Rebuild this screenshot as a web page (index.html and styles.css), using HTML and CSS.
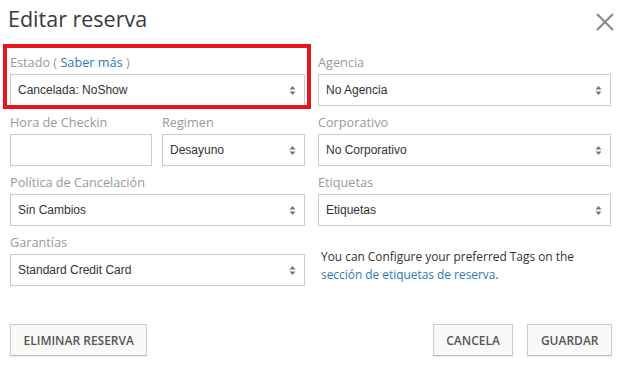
FILE: index.html
```html
<!DOCTYPE html>
<html lang="es">
<head>
<meta charset="utf-8">
<title>Editar reserva</title>
<link rel="stylesheet" href="styles.css">
</head>
<body>
<div class="modal">
  <div class="header">
    <h1 class="title">Editar reserva</h1>
    <svg class="close" width="18" height="18" viewBox="0 0 18 18"><path d="M1 1L17 17M17 1L1 17" stroke="#8a8a8a" stroke-width="2.2" fill="none"/></svg>
  </div>
  <div class="form">
    <div class="group highlight">
      <div class="label">Estado ( <span class="link">Saber más</span> )</div>
      <div class="select"><span>Cancelada: NoShow</span><svg class="arrows" width="7" height="11" viewBox="0 0 7 11"><path d="M3.5 1L6.5 4.5H0.5Z M3.5 10L6.5 6.5H0.5Z" fill="#777"/></svg></div>
    </div>
    <div class="group">
      <div class="label">Agencia</div>
      <div class="select"><span>No Agencia</span><svg class="arrows" width="7" height="11" viewBox="0 0 7 11"><path d="M3.5 1L6.5 4.5H0.5Z M3.5 10L6.5 6.5H0.5Z" fill="#777"/></svg></div>
    </div>
    <div class="pair">
      <div class="group">
        <div class="label">Hora de Checkin</div>
        <div class="input"></div>
      </div>
      <div class="group">
        <div class="label">Regimen</div>
        <div class="select"><span>Desayuno</span><svg class="arrows" width="7" height="11" viewBox="0 0 7 11"><path d="M3.5 1L6.5 4.5H0.5Z M3.5 10L6.5 6.5H0.5Z" fill="#777"/></svg></div>
      </div>
    </div>
    <div class="group">
      <div class="label">Corporativo</div>
      <div class="select"><span>No Corporativo</span><svg class="arrows" width="7" height="11" viewBox="0 0 7 11"><path d="M3.5 1L6.5 4.5H0.5Z M3.5 10L6.5 6.5H0.5Z" fill="#777"/></svg></div>
    </div>
    <div class="group">
      <div class="label">Política de Cancelación</div>
      <div class="select"><span>Sin Cambios</span><svg class="arrows" width="7" height="11" viewBox="0 0 7 11"><path d="M3.5 1L6.5 4.5H0.5Z M3.5 10L6.5 6.5H0.5Z" fill="#777"/></svg></div>
    </div>
    <div class="group">
      <div class="label">Etiquetas</div>
      <div class="select"><span>Etiquetas</span><svg class="arrows" width="7" height="11" viewBox="0 0 7 11"><path d="M3.5 1L6.5 4.5H0.5Z M3.5 10L6.5 6.5H0.5Z" fill="#777"/></svg></div>
    </div>
    <div class="group">
      <div class="label">Garantías</div>
      <div class="select"><span>Standard Credit Card</span><svg class="arrows" width="7" height="11" viewBox="0 0 7 11"><path d="M3.5 1L6.5 4.5H0.5Z M3.5 10L6.5 6.5H0.5Z" fill="#777"/></svg></div>
    </div>
    <div class="help">
      You can Configure your preferred Tags on the<br>
      <span class="link">sección de etiquetas de reserva</span>.
    </div>
  </div>
  <div class="footer">
    <button class="btn">ELIMINAR RESERVA</button>
    <div class="right">
      <button class="btn">CANCELA</button>
      <button class="btn">GUARDAR</button>
    </div>
  </div>
</div>
</body>
</html>
```

FILE: styles.css
```css
html, body {
  margin: 0;
  padding: 0;
  background: #fff;
}
.modal {
  width: 624px;
  height: 368px;
  box-sizing: border-box;
  padding: 3px 10px 0 10px;
  font-family: "Open Sans", sans-serif;
  color: #333;
}
.header {
  display: flex;
  justify-content: space-between;
  align-items: flex-start;
  height: 50px;
}
.title {
  margin: 0 0 0 -2px;
  font-size: 21.5px;
  font-weight: 400;
  line-height: 32px;
  color: #3a3a3a;
}
.close {
  margin-top: 10px;
  margin-right: 0;
}
.form {
  display: grid;
  grid-template-columns: 295px 293px;
  column-gap: 13px;
  row-gap: 7px;
}
.group {
  display: flex;
  flex-direction: column;
  position: relative;
}
.highlight::after {
  content: "";
  position: absolute;
  left: -7px;
  right: -6px;
  top: -9px;
  bottom: -3px;
  border: 4px solid #e8141c;
  pointer-events: none;
}
.pair {
  display: grid;
  grid-template-columns: 142px 143px;
  column-gap: 10px;
}
.label {
  font-size: 12.7px;
  line-height: 18px;
  color: #999;
  margin-bottom: 3px;
  white-space: nowrap;
}
.link {
  color: #2a7ab8;
}
.select, .input {
  height: 32px;
  box-sizing: border-box;
  border: 1px solid #ccc;
  background: #fff;
}
.select {
  display: flex;
  align-items: center;
  justify-content: space-between;
  padding: 0 8px 0 7px;
  font-family: "Liberation Sans", Arial, sans-serif;
  font-size: 12px;
  color: #333;
}
.arrows {
  display: block;
}
.help {
  font-size: 11.9px;
  line-height: 18px;
  color: #333;
  padding: 14px 0 0 3px;
}
.footer {
  display: flex;
  justify-content: space-between;
  margin-top: 38px;
}
.right {
  display: flex;
  gap: 14px;
  margin-right: 2px;
}
.btn {
  font-family: "Open Sans", sans-serif;
  font-size: 12px;
  font-weight: 600;
  color: #555;
  background: #f9f9f9;
  border: 1px solid #ccc;
  border-bottom-color: #bbb;
  box-shadow: 0 1px 1px rgba(0,0,0,0.08);
  height: 32px;
  padding: 0 12.5px;
  border-radius: 1px;
  cursor: pointer;
}
```
